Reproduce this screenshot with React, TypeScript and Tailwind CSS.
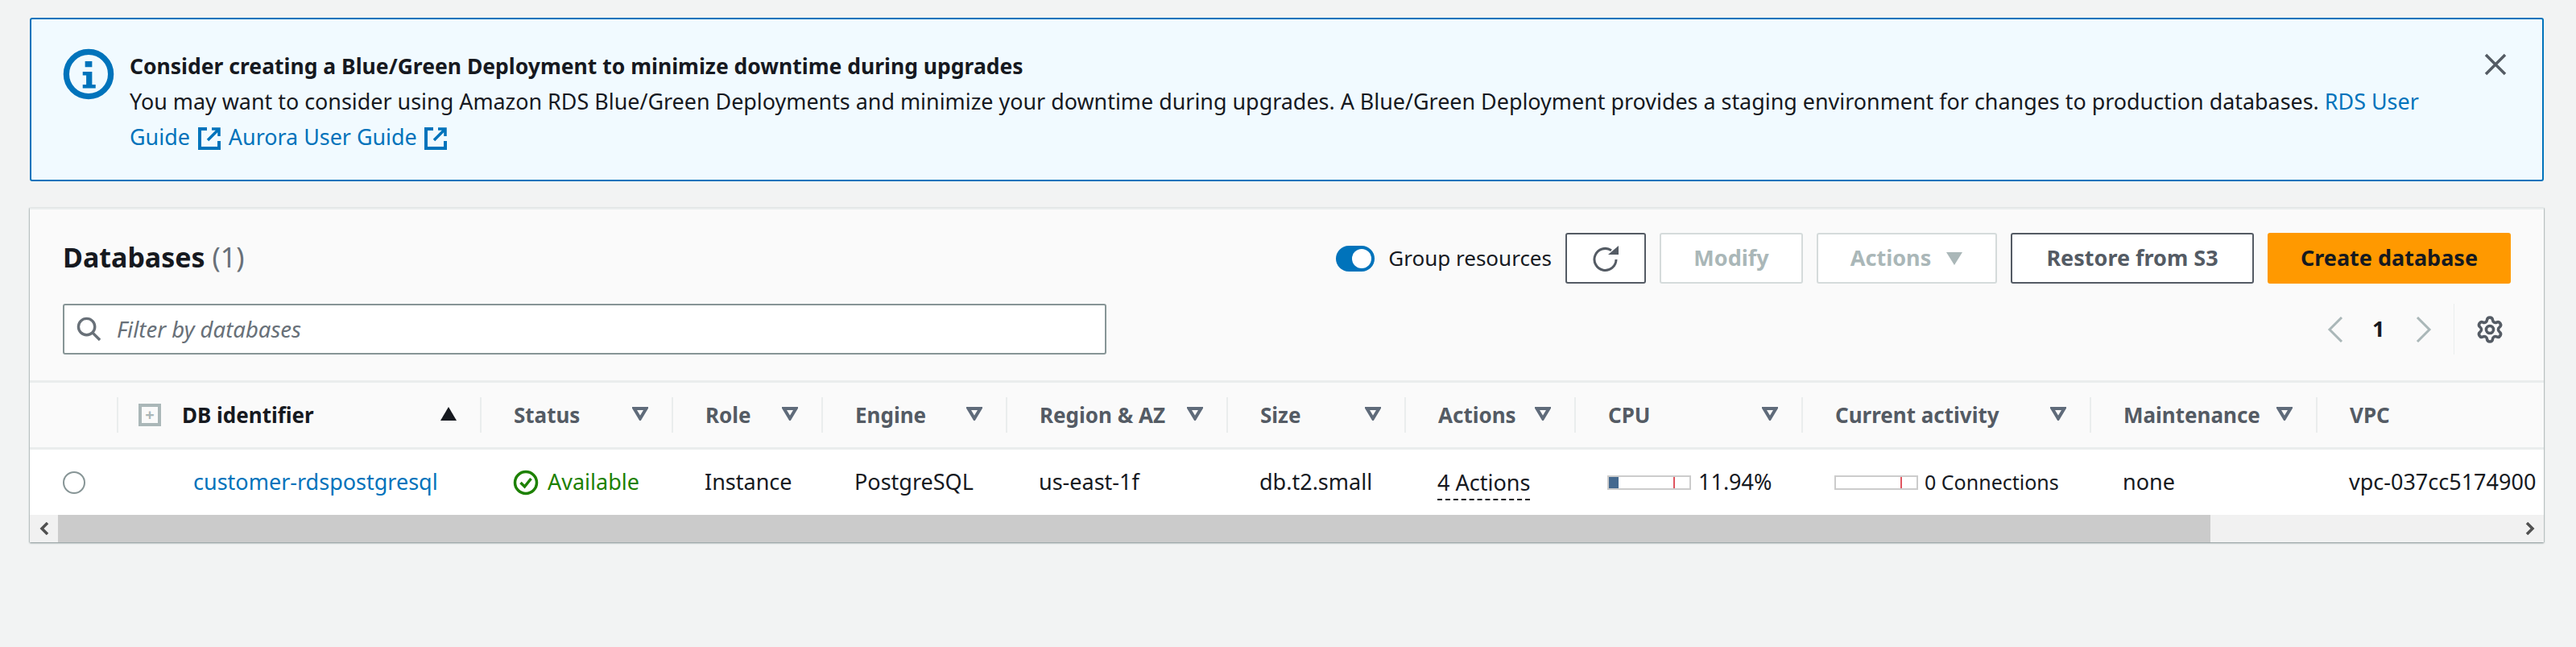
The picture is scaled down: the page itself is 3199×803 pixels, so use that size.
import React from "react";
import { Settings } from "lucide-react";

const External = ({ className }: { className: string }) => (
  <svg viewBox="0 0 28 28" className={`inline-block w-[28px] h-[28px] align-[-6px] ${className}`} fill="none" stroke="#0073bb" strokeWidth="4">
    <path d="M11 2H2v24h24v-9" />
    <path d="M17 2h9v9M25 3L12 16" strokeWidth="3.5" />
  </svg>
);

const Caret = () => (
  <svg viewBox="0 0 20 17" className="w-[20px] h-[17px] shrink-0 -mt-[4px]" fill="none" stroke="#5f6b7a" strokeWidth="4">
    <path d="M2.500 2h15L10 14.500z" />
  </svg>
);

const columns = [
  { label: "Status", w: "w-[238px]", value: null },
  { label: "Role", w: "w-[186px]", value: "Instance" },
  { label: "Engine", w: "w-[229px]", value: "PostgreSQL" },
  { label: "Region & AZ", w: "w-[274px]", value: "us-east-1f" },
  { label: "Size", w: "w-[221px]", value: "db.t2.small" },
  { label: "Actions", w: "w-[211px]", value: null },
  { label: "CPU", w: "w-[282px]", value: null },
  { label: "Current activity", w: "w-[358px]", value: null },
  { label: "Maintenance", w: "w-[281px]", value: "none" },
];

const Bar = ({ fill }: { fill?: boolean }) => (
  <div className="relative w-[104px] h-[18px] border-2 border-[#cccccc] bg-white shrink-0">
    {fill && <div className="absolute left-0 top-0 bottom-0 w-[12px] bg-[#44698f]" />}
    <div className="absolute left-[80px] top-0 bottom-0 w-[2px] bg-[#e0555f]" />
  </div>
);

function cell(label: string, value: string | null) {
  if (label === "Status")
    return (
      <span className="flex items-center gap-[11px] text-[#1d8102]">
        <svg viewBox="0 0 32 32" className="w-[32px] h-[32px]" fill="none" stroke="#1d8102" strokeWidth="3.5">
          <circle cx="16" cy="16" r="13.5" />
          <path d="M9.500 16l5 5 8-10" />
        </svg>
        Available
      </span>
    );
  if (label === "Actions")
    return <span className="border-b-2 border-dashed border-[#16191f] leading-[36px] h-[40px] mt-[4px]">4 Actions</span>;
  if (label === "CPU")
    return (
      <span className="flex items-center gap-[9px]">
        <Bar fill />
        11.94%
      </span>
    );
  if (label === "Current activity")
    return (
      <span className="flex items-center gap-[8px] text-[25px]">
        <Bar />0 Connections
      </span>
    );
  return value;
}

export default function App() {
  return (
    <div className="min-h-[803px] bg-[#f2f3f3] pt-[22px] pl-[37px] pr-[40px] text-[#16191f] text-[27px] font-['Noto_Sans',sans-serif]">
      <div className="h-[203px] border-2 border-[#0073bb] rounded-[3px] bg-[#f1faff] flex pl-[39px] pr-[44px] pt-[36px]">
        <svg viewBox="0 0 44 44" className="w-[64px] h-[64px] shrink-0" fill="none">
          <circle cx="22" cy="22" r="19" stroke="#0073bb" strokeWidth="5" />
          <path d="M19 11h6v5h-6zM17 20h8v11h3v3H17v-3h3v-8h-3z" fill="#0073bb" />
        </svg>
        <div className="ml-[19px] w-[2870px] shrink-0">
          <div className="font-bold text-[26.5px] leading-[44px]">Consider creating a Blue/Green Deployment to minimize downtime during upgrades</div>
          <div className="leading-[44px] text-[26.9px]">
            You may want to consider using Amazon RDS Blue/Green Deployments and minimize your downtime during upgrades. A Blue/Green Deployment provides a staging environment for changes to production databases.{" "}
            <span className="text-[#0073bb]">RDS User Guide</span>
            <External className="ml-[10px] mr-[10px]" />
            <span className="text-[#0073bb]">Aurora User Guide</span>
            <External className="ml-[9px]" />
          </div>
        </div>
        <svg viewBox="0 0 28 28" className="w-[28px] h-[28px] shrink-0 ml-auto mt-[6px]" fill="none" stroke="#545b64" strokeWidth="3.5">
          <path d="M2 2l24 24M26 2L2 26" />
        </svg>
      </div>

      <div className="mt-[33px] h-[415px] w-[3122px] bg-[#fafafa] border-t-2 border-[#eaeded] shadow-[0_1px_2px_#7f8c8d,1px_0_1px_#d5dbdb,-1px_0_1px_#d5dbdb] flex flex-col overflow-hidden">
        <div className="h-[215px] shrink-0 border-b-[3px] border-[#eaeded] pl-[41px] pr-[41px]">
          <div className="flex items-center h-[63px] mt-[29px]">
            <div className="text-[34px] font-bold leading-none mb-[4px]">
              Databases <span className="font-normal text-[#687078]">(1)</span>
            </div>
            <div className="ml-auto flex items-center">
              <span className="w-[48px] h-[32px] rounded-full bg-[#0073bb] relative">
                <span className="absolute right-[4px] top-[4px] w-[24px] h-[24px] rounded-full bg-white" />
              </span>
              <span className="ml-[17px] text-[26px]">Group resources</span>
              <button className="ml-[17px] w-[100px] h-[63px] border-2 border-[#545b64] rounded-[3px] bg-white flex items-center justify-center">
                <svg viewBox="0 0 32 32" className="w-[32px] h-[32px]" fill="none" stroke="#545b64" strokeWidth="3">
                  <path d="M29 17a13.500 13.500 0 1 1-6-11.300" />
                  <path d="M19 11h13V0z" fill="#545b64" stroke="none" />
                </svg>
              </button>
              <button className="ml-[17px] w-[178px] h-[63px] border-2 border-[#d5dbdb] rounded-[3px] bg-white text-[#aab7b8] font-bold">Modify</button>
              <button className="ml-[17px] w-[224px] h-[63px] border-2 border-[#d5dbdb] rounded-[3px] bg-white text-[#aab7b8] font-bold flex items-center justify-center gap-[18px]">
                Actions
                <svg viewBox="0 0 20 16" className="w-[22px] h-[16px]">
                  <path d="M0 0h20L10 16z" fill="#aab7b8" />
                </svg>
              </button>
              <button className="ml-[17px] w-[302px] h-[63px] border-2 border-[#545b64] rounded-[3px] bg-white text-[#545b64] font-bold">Restore from S3</button>
              <button className="ml-[17px] w-[302px] h-[63px] rounded-[3px] bg-[#ff9900] text-[#16191f] font-bold">Create database</button>
            </div>
          </div>
          <div className="flex items-center mt-[25px] h-[63px]">
            <div className="w-[1296px] h-[63px] border-2 border-[#879596] rounded-[3px] bg-white flex items-center pl-[15px]">
              <svg viewBox="0 0 32 32" className="w-[31px] h-[31px]" fill="none" stroke="#687078" strokeWidth="3.5">
                <circle cx="13" cy="13" r="10.500" />
                <path d="M20 20l10 10" />
              </svg>
              <span className="ml-[19px] italic text-[27.5px] text-[#687078]">Filter by databases</span>
            </div>
            <div className="ml-auto flex items-center mr-[8px]">
              <svg viewBox="0 0 20 32" className="w-[20px] h-[32px]" fill="none" stroke="#aab7b8" strokeWidth="3">
                <path d="M18 1L3 16l15 15" />
              </svg>
              <span className="ml-[36px] w-[16px] font-bold">1</span>
              <svg viewBox="0 0 20 32" className="ml-[38px] w-[20px] h-[32px]" fill="none" stroke="#aab7b8" strokeWidth="3">
                <path d="M2 1l15 15L2 31" />
              </svg>
              <div className="ml-[27px] h-[63px] w-px bg-[#eaeded]" />
              <Settings className="ml-[26px] w-[36px] h-[36px] text-[#545b64]" strokeWidth={2.4} />
            </div>
          </div>
        </div>

        <div className="h-[83px] shrink-0 border-b-[3px] border-[#eaeded] flex items-center text-[#545b64] font-bold text-[26px] overflow-hidden">
          <div className="w-[108px] shrink-0 h-[44px]" />
          <div className="w-[451px] shrink-0 h-[44px] border-l-2 border-[#eaeded] flex items-center pl-[25px] pr-[29px]">
            <span className="w-[28px] h-[28px] bg-[#aab7b8] flex items-center justify-center shrink-0">
              <span className="w-[20px] h-[20px] bg-[#fafafa] text-[#aab7b8] flex items-center justify-center text-[20px] leading-none">+</span>
            </span>
            <span className="ml-[26px] text-[#16191f]">DB identifier</span>
            <svg viewBox="0 0 20 17" className="ml-auto w-[20px] h-[17px] -mt-[4px]">
              <path d="M10 0L20 17H0z" fill="#16191f" />
            </svg>
          </div>
          {columns.map((c) => (
            <div key={c.label} className={`${c.w} shrink-0 h-[44px] border-l-2 border-[#eaeded] flex items-center pl-[40px] pr-[29px] justify-between`}>
              <span className="whitespace-nowrap">{c.label}</span>
              <Caret />
            </div>
          ))}
          <div className="shrink-0 h-[44px] border-l-2 border-[#eaeded] flex items-center pl-[40px]">VPC</div>
        </div>

        <div className="h-[81px] shrink-0 bg-white flex items-center overflow-hidden whitespace-nowrap">
          <div className="w-[108px] shrink-0 pl-[41px]">
            <div className="w-[28px] h-[28px] rounded-full border-2 border-[#879596]" />
          </div>
          <div className="w-[451px] shrink-0 pl-[95px] text-[#0073bb]">customer-rdspostgresql</div>
          {columns.map((c) => (
            <div key={c.label} className={`${c.w} shrink-0 pl-[41px] flex items-center`}>
              {cell(c.label, c.value)}
            </div>
          ))}
          <div className="shrink-0 pl-[41px]">vpc-037cc5174900</div>
        </div>

        <div className="h-[34px] shrink-0 bg-[#f1f1f1] flex items-center">
          <div className="w-[35px] h-full flex items-center justify-center">
            <svg viewBox="0 0 12 16" className="w-[12px] h-[16px]" fill="none" stroke="#505050" strokeWidth="3.5">
              <path d="M10 1L3 8l7 7" />
            </svg>
          </div>
          <div className="w-[2673px] h-full bg-[#cbcbcb]" />
          <div className="ml-auto w-[35px] h-full flex items-center justify-center">
            <svg viewBox="0 0 12 16" className="w-[12px] h-[16px]" fill="none" stroke="#505050" strokeWidth="3.5">
              <path d="M2 1l7 7-7 7" />
            </svg>
          </div>
        </div>
      </div>
    </div>
  );
}
